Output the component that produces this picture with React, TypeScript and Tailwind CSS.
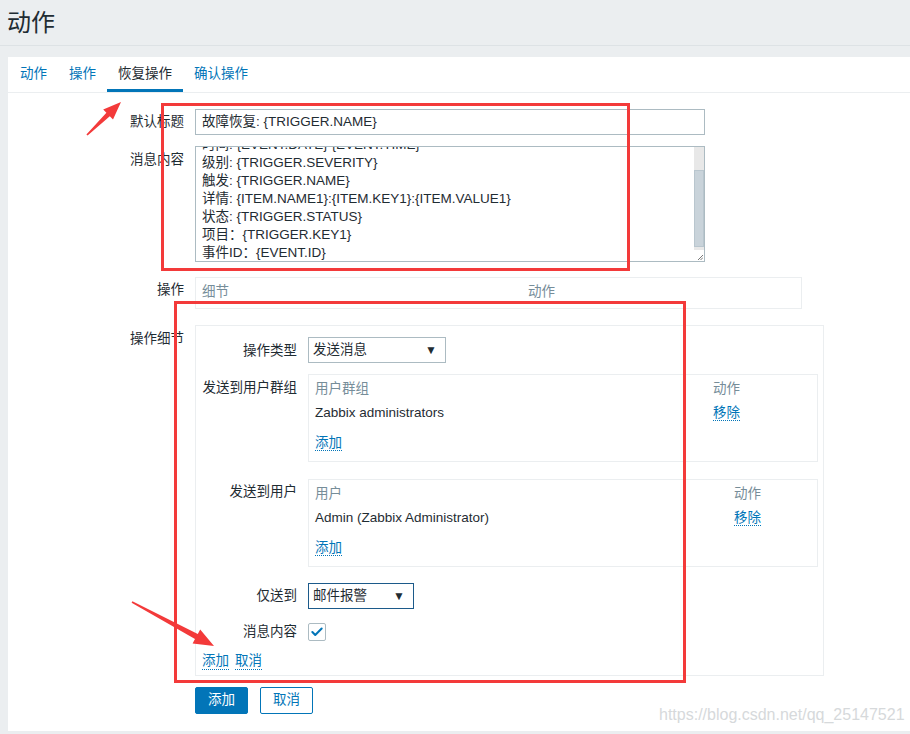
import { Check } from "lucide-react";

const font = "font-['Liberation_Sans','Noto_Sans_CJK_SC',sans-serif]";

function Tabs() {
  const tabs = ["动作", "操作", "恢复操作", "确认操作"];
  return (
    <div className="flex border-b border-[#ebeef0] pl-px">
      {tabs.map((t) => (
        <div
          key={t}
          className={
            t === "恢复操作"
              ? "border-b-[3px] border-[#0275b8] px-[11px] pt-[8px] pb-[6px] leading-[18px] text-[#1f2c33]"
              : "border-b-[3px] border-transparent px-[11px] pt-[8px] pb-[6px] leading-[18px] text-[#0275b8]"
          }
        >
          {t}
        </div>
      ))}
    </div>
  );
}

function Link({ children }: { children: string }) {
  return (
    <span className="border-b border-dotted border-[#0275b8] leading-[16px] text-[#0275b8]">{children}</span>
  );
}

function Select({ value, width, focused }: { value: string; width: string; focused?: boolean }) {
  return (
    <div
      className={`flex h-[26px] items-center justify-between border pl-[4px] pr-[8px] ${width} ${
        focused ? "border-[#1c5a8a]" : "border-[#acbbc2]"
      }`}
    >
      <span className="text-[#1f2c33]">{value}</span>
      <span className="text-[12px] text-[#1f2c33]">▼</span>
    </div>
  );
}

function ListBox({ head, item, firstCol }: { head: string; item: string; firstCol: string }) {
  return (
    <div className="w-[510px] border border-[#ebeef0] pt-[5px] pb-[9px] pl-[6px] leading-[18px]">
      <div className="flex text-[#768d99]">
        <div className={firstCol}>{head}</div>
        <div>动作</div>
      </div>
      <div className="mt-[6px] flex text-[#1f2c33]">
        <div className={firstCol}>{item}</div>
        <div>
          <Link>移除</Link>
        </div>
      </div>
      <div className="mt-[12px]">
        <Link>添加</Link>
      </div>
    </div>
  );
}

function InnerRow({ label, children, labelPad = "pt-[5px]" }: { label: string; children: React.ReactNode; labelPad?: string }) {
  return (
    <div className="flex">
      <div className={`w-[95px] shrink-0 text-right leading-[18px] text-[#1f2c33] ${labelPad}`}>{label}</div>
      <div className="ml-[11px]">{children}</div>
    </div>
  );
}

function FormRow({ label, children, labelPad = "pt-[4px]" }: { label: string; children: React.ReactNode; labelPad?: string }) {
  return (
    <div className="flex">
      <div className={`w-[187px] shrink-0 pr-[11px] text-right leading-[18px] text-[#1f2c33] ${labelPad}`}>{label}</div>
      <div>{children}</div>
    </div>
  );
}

const messageLines = [
  "时间: {EVENT.DATE} {EVENT.TIME}",
  "级别: {TRIGGER.SEVERITY}",
  "触发: {TRIGGER.NAME}",
  "详情: {ITEM.NAME1}:{ITEM.KEY1}:{ITEM.VALUE1}",
  "状态: {TRIGGER.STATUS}",
  "项目：{TRIGGER.KEY1}",
  "事件ID：{EVENT.ID}",
];

export default function App() {
  return (
    <div className={`relative min-h-[734px] overflow-hidden bg-[#ebeef0] text-[13.5px] ${font}`}>
      <div className="h-[46px] border-b border-[#dde2e5] pl-[7px] pt-[8px] text-[24px] leading-[30px] text-[#1f2c33]">
        动作
      </div>
      <div className="ml-[8px] mt-[11px] h-[674px] bg-white">
        <Tabs />
        <div className="flex flex-col pt-[16px]">
          <FormRow label="默认标题">
            <div className="flex h-[26px] w-[510px] items-center border border-[#acbbc2] pl-[6px] text-[#1f2c33]">
              故障恢复: {"{TRIGGER.NAME}"}
            </div>
          </FormRow>
          <div className="mt-[11px]">
            <FormRow label="消息内容" labelPad="pt-[5px]">
              <div className="relative flex h-[116px] w-[510px] overflow-hidden border border-[#acbbc2]">
                <div className="flex-1 pl-[6px] leading-[18px] text-[#1f2c33]">
                  <div className="-mt-[11px]">
                    {messageLines.map((l) => (
                      <div key={l}>{l}</div>
                    ))}
                  </div>
                </div>
                <div className="flex w-[10px] flex-col">
                  <div className="h-[23px] bg-[#e8e8e8]" />
                  <div className="h-[77px] border border-[#b9c6ce] bg-[#c9d3da]" />
                  <div className="h-[3px] bg-[#e8e8e8]" />
                  <div className="relative flex-1 bg-white">
                    <svg className="absolute right-[1px] bottom-[1px]" width="6" height="6" viewBox="0 0 6 6">
                      <path d="M6 1 L1 6 M6 3.5 L3.5 6" stroke="#555" strokeWidth="0.8" />
                    </svg>
                  </div>
                </div>
              </div>
            </FormRow>
          </div>
          <div className="mt-[15px]">
            <FormRow label="操作" labelPad="pt-[4px]">
              <div className="flex w-[607px] border border-[#ebeef0] pt-[5px] pb-[7px] pl-[6px] leading-[18px] text-[#768d99]">
                <div className="w-[326px]">细节</div>
                <div>动作</div>
              </div>
            </FormRow>
          </div>
          <div className="mt-[16px]">
            <FormRow label="操作细节" labelPad="pt-[5px]">
              <div className="w-[629px] border border-[#ebeef0] pt-[11px] pb-[5px] pl-[6px]">
                <InnerRow label="操作类型">
                  <Select value="发送消息" width="w-[138px]" />
                </InnerRow>
                <div className="mt-[11px]">
                  <InnerRow label="发送到用户群组">
                    <ListBox head="用户群组" item="Zabbix administrators" firstCol="w-[398px]" />
                  </InnerRow>
                </div>
                <div className="mt-[17px]">
                  <InnerRow label="发送到用户" labelPad="pt-[4px]">
                    <ListBox head="用户" item="Admin (Zabbix Administrator)" firstCol="w-[419px]" />
                  </InnerRow>
                </div>
                <div className="mt-[16px]">
                  <InnerRow label="仅送到" labelPad="pt-[4px]">
                    <Select value="邮件报警" width="w-[106px]" focused />
                  </InnerRow>
                </div>
                <div className="mt-[10px]">
                  <InnerRow label="消息内容" labelPad="pt-[4px]">
                    <div className="flex h-[26px] items-center">
                      <div className="flex h-[18px] w-[18px] items-center justify-center rounded-[2px] border border-[#acbbc2]">
                        <Check className="h-[14px] w-[14px] text-[#0275b8]" strokeWidth={3.5} />
                      </div>
                    </div>
                  </InnerRow>
                </div>
                <div className="mt-[8px] flex gap-[6px] leading-[18px]">
                  <Link>添加</Link>
                  <Link>取消</Link>
                </div>
              </div>
            </FormRow>
          </div>
          <div className="mt-[11px] flex gap-[12px] pl-[187px]">
            <button className="h-[27px] w-[53px] rounded-[2px] border border-[#0275b8] bg-[#0275b8] text-white">添加</button>
            <button className="h-[27px] w-[53px] rounded-[2px] border border-[#0275b8] bg-white text-[#0275b8]">取消</button>
          </div>
        </div>
      </div>

      {/* annotations */}
      <div className="pointer-events-none absolute left-[161px] top-[103px] h-[168px] w-[469px] border-[3px] border-[#f33a3a]" />
      <div className="pointer-events-none absolute left-[174px] top-[301px] h-[382px] w-[512px] border-[3px] border-[#f33a3a]" />
      <svg className="pointer-events-none absolute left-0 top-0" width="910" height="734">
        <polygon
          points="87.6,135.6 109.8,116.3 113,119.5 121,102 103.2,109.5 106.4,112.7 86.4,134.4"
          fill="#f33a3a"
        />
        <polygon
          points="131.6,602.7 195,639.1 192.6,643.5 214,646 200.2,629.5 197.8,633.9 132.4,601.3"
          fill="#f33a3a"
        />
      </svg>
      <div className="pointer-events-none absolute left-[659px] top-[705px] text-[16px] leading-[20px] text-[#d6d9db]">
        https://blog.csdn.net/qq_25147521
      </div>
    </div>
  );
}
